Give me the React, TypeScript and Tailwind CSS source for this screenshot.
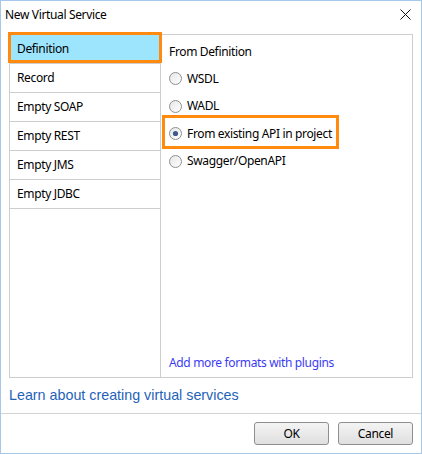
import React from "react";

const ui = { fontFamily: '"Noto Sans", "Open Sans", sans-serif' };

const leftItems = ["Definition", "Record", "Empty SOAP", "Empty REST", "Empty JMS", "Empty JDBC"];

const formats = [
  { label: "WSDL", checked: false },
  { label: "WADL", checked: false },
  { label: "From existing API in project", checked: true },
  { label: "Swagger/OpenAPI", checked: false },
];

function Radio({ checked }: { checked: boolean }) {
  return (
    <svg width="13" height="13" viewBox="0 0 13 13" className="shrink-0">
      <defs>
        <linearGradient id="rg" x1="0" y1="0" x2="1" y2="1">
          <stop offset="0" stopColor="#e6e6e6" />
          <stop offset="1" stopColor="#ffffff" />
        </linearGradient>
      </defs>
      <circle cx="6.5" cy="6.5" r="6" fill="url(#rg)" stroke="#8e8f8f" strokeWidth="1" />
      {checked && <circle cx="6.5" cy="6.5" r="2.6" fill="#3d5a8c" />}
    </svg>
  );
}

export default function App() {
  return (
    <div
      className="flex h-[454px] w-[422px] flex-col border border-[#a6c8ea] bg-white text-[12px] tracking-[-0.35px] text-black"
      style={ui}
    >
      {/* Title bar */}
      <div className="flex h-[27px] items-center justify-between pl-[4px] pr-[10px]">
        <span>New Virtual Service</span>
        <svg width="11" height="11" viewBox="0 0 11 11">
          <path d="M0.5 0.5 L10.5 10.5 M10.5 0.5 L0.5 10.5" stroke="#111" strokeWidth="1" />
        </svg>
      </div>

      {/* Main panel */}
      <div className="mx-[8px] mt-[6px] flex h-[344px] border border-[#cdcdcd]">
        {/* Left list */}
        <div className="flex w-[151px] flex-col border-r border-[#cdcdcd]">
          {leftItems.map((item, i) => (
            <div
              key={item}
              className={`relative flex h-[29px] items-center border-b border-[#cdcdcd] pl-[7px] ${
                i === 0 ? "bg-[#9de4fd]" : ""
              }`}
            >
              {i === 0 && (
                <div className="pointer-events-none absolute -left-[2px] -right-[2px] -top-[3px] bottom-[0px] border-[3px] border-[#ff8a0d]" />
              )}
              <span className="relative">{item}</span>
            </div>
          ))}
        </div>

        {/* Right options */}
        <div className="flex flex-1 flex-col pl-[8px]">
          <div className="mt-[9px] leading-[16px]">From Definition</div>
          <div className="mt-[5px] flex flex-col">
            {formats.map((f) => (
              <div key={f.label} className="relative flex h-[27.5px] items-center gap-[5px]">
                {f.checked && (
                  <div className="pointer-events-none absolute -left-[7px] top-[-5px] h-[34px] w-[177px] border-[3px] border-[#ff8a0d]" />
                )}
                <Radio checked={f.checked} />
                <span>{f.label}</span>
              </div>
            ))}
          </div>
          <div className="mt-auto mb-[6px] leading-[16px] text-[#3b3bf5]">Add more formats with plugins</div>
        </div>
      </div>

      {/* Learn link */}
      <div
        className="flex h-[35px] items-center pl-[8px] text-[14.3px] tracking-normal text-[#1f63b8]"
        style={{ fontFamily: '"Liberation Sans", Arial, sans-serif' }}
      >
        Learn about creating virtual services
      </div>

      {/* Footer */}
      <div className="flex flex-1 items-start justify-end gap-[9px] border-t border-[#d3d3d3] pr-[8px] pt-[8px]">
        {["OK", "Cancel"].map((b) => (
          <button
            key={b}
            className="flex h-[23px] w-[75px] items-center justify-center rounded-[3px] border border-[#8f8f8f] bg-gradient-to-b from-[#f4f4f4] to-[#dfdfdf]"
          >
            {b}
          </button>
        ))}
      </div>
    </div>
  );
}
